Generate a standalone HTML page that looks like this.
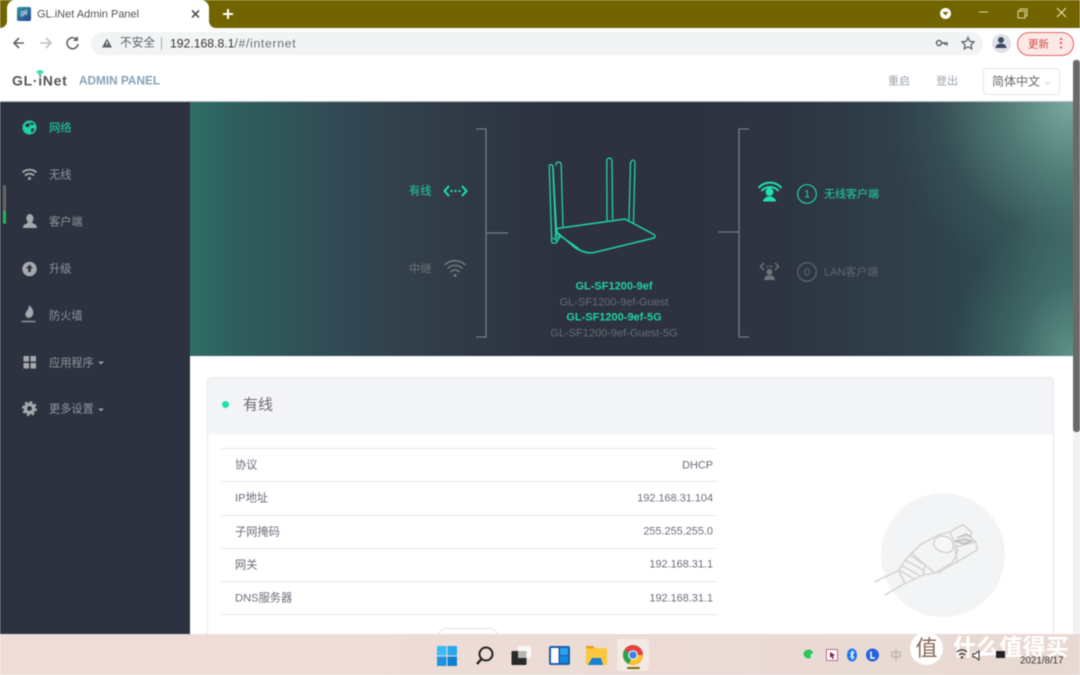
<!DOCTYPE html>
<html lang="zh"><head><meta charset="utf-8"><title>GL.iNet Admin Panel</title>
<style>
html,body{margin:0;padding:0;width:1080px;height:675px;overflow:hidden;background:#fff;font-family:"Liberation Sans","Noto Sans CJK SC",sans-serif}
#r{position:absolute;left:0;top:0;width:1080px;height:675px;overflow:hidden;filter:blur(.4px)}
.a{position:absolute}
.t{position:absolute;white-space:nowrap;line-height:16px;transform:translateY(-7.5px)}
.s{font-size:11.2px;color:#92959d;left:49px}
.l{font-size:11.2px;color:#6c6c7a;left:235px}
.v{font-size:10.9px;color:#6c6c7a;right:367px}
.n{font-size:11px;color:#666b73;left:514px;width:200px;text-align:center}
.g{color:#1fd3a2;font-weight:bold}
.h{position:absolute;left:221px;width:496px;height:1px;background:#e6e7ea}
</style></head><body><div id="r">
<!-- chrome -->
<div class="a" style="left:0;top:0;width:1080px;height:28px;background:#726500"></div>
<div class="a" style="left:0;top:28px;width:1080px;height:31px;background:#fff"></div>
<div class="a" style="left:0;top:20px;width:216px;height:8px;background:#fff"></div>
<div class="a" style="left:0;top:0;width:7px;height:28px;background:#726500;border-radius:0 0 7px 0"></div>
<div class="a" style="left:209px;top:0;width:8px;height:28px;background:#726500;border-radius:0 0 0 7px"></div>
<div class="a" style="left:7px;top:0;width:202px;height:28px;background:#fff;border-radius:8px 8px 0 0"></div>
<div class="a" style="left:17px;top:7px;width:14px;height:14px;border-radius:2px;background:linear-gradient(135deg,#2b9a9a,#2a3f9c);color:#fff;font-size:7px;font-style:italic;line-height:14px;text-align:center">gli</div>
<div class="t" style="left:37px;top:14px;font-size:11px;color:#555">GL.iNet Admin Panel</div>
<div class="a" style="left:91px;top:32px;width:892px;height:23px;border-radius:12px;background:#f1f3f4"></div>
<div class="t" style="left:120px;top:43px;font-size:11.7px;color:#5f6368">不安全</div>
<div class="a" style="left:161px;top:37px;width:1px;height:13px;background:#a8abaf"></div>
<div class="t" style="left:170px;top:43px;font-size:12.2px;color:#333">192.168.8.1<span style="color:#6a6d72;letter-spacing:.7px">/#/internet</span></div>
<div class="a" style="left:992px;top:34px;width:19px;height:19px;border-radius:50%;background:#dfe1e6"></div>
<div class="a" style="left:1017px;top:32px;width:55px;height:22px;border:1px solid #dc6a60;border-radius:12px;background:#fce8e6"></div>
<div class="t" style="left:1028px;top:44px;font-size:10.5px;color:#d04a40">更新</div>
<!-- header -->
<div class="a" style="left:0;top:59px;width:1080px;height:43px;background:#fff;border-bottom:1px solid #b9bdc3;box-sizing:border-box"></div>
<div class="t" style="left:12px;top:80px;font-size:14px;font-weight:bold;color:#555;letter-spacing:.7px">GL·iNet</div>
<div class="t" style="left:79px;top:80px;font-size:11.8px;font-weight:bold;color:#86a2b9">ADMIN PANEL</div>
<div class="t" style="left:888px;top:81px;font-size:11px;color:#9aa3ad">重启</div>
<div class="t" style="left:936px;top:81px;font-size:11px;color:#9aa3ad">登出</div>
<div class="a" style="left:983px;top:68px;width:75px;height:25px;border:1px solid #e3e5e8;border-radius:4px;box-sizing:content-box"></div>
<div class="t" style="left:992px;top:81px;font-size:12px;color:#6a6a6a">简体中文</div>
<!-- sidebar -->
<div class="a" style="left:0;top:102px;width:190px;height:533px;background:#2d3240"></div>
<div class="a" style="left:3px;top:185px;width:3px;height:39px;border-radius:2px;background:linear-gradient(#666 0,#666 67%,#22b35e 67%)"></div>
<div class="t s" style="top:127.500px;color:#1fd3a2">网络</div>
<div class="t s" style="top:174.500px">无线</div>
<div class="t s" style="top:221.500px">客户端</div>
<div class="t s" style="top:268.500px">升级</div>
<div class="t s" style="top:315.500px">防火墙</div>
<div class="t s" style="top:362.500px">应用程序</div>
<div class="t s" style="top:409px">更多设置</div>
<!-- banner -->
<div class="a" style="left:190px;top:102px;width:883px;height:254px;background:radial-gradient(ellipse 190px 190px at 100% 0%,rgba(122,168,160,1) 0%,rgba(100,148,138,.6) 38%,rgba(80,120,115,.2) 72%,rgba(70,110,105,0) 100%),radial-gradient(ellipse 120px 150px at 100% 100%,rgba(100,150,140,.9) 0%,rgba(80,130,122,.45) 48%,rgba(60,110,105,0) 100%),linear-gradient(90deg,#2e6e66 0%,#2f5f5d 5%,#305659 10%,#314a54 17%,#333f4c 25%,#2f3845 33%,#2e3240 42%,#2e3240 55%,#2e3542 68%,#303c49 77%,#2f444d 86%,#2f4d52 93%,#36605f 100%)"></div>
<div class="t" style="left:409px;top:191px;font-size:11.2px;color:#1fd3a2">有线</div>
<div class="t" style="left:409px;top:268.500px;font-size:11.2px;color:#6b7378">中继</div>
<div class="t n g" style="top:286px">GL-SF1200-9ef</div>
<div class="t n" style="top:301.500px">GL-SF1200-9ef-Guest</div>
<div class="t n g" style="top:317px">GL-SF1200-9ef-5G</div>
<div class="t n" style="top:333px">GL-SF1200-9ef-Guest-5G</div>
<div class="t" style="left:797px;width:20px;text-align:center;top:194px;font-size:11px;color:#1fd3a2">1</div>
<div class="t" style="left:797px;width:20px;text-align:center;top:272px;font-size:11px;color:#5f676d">0</div>
<div class="t" style="left:824px;top:194px;font-size:11px;color:#1fd3a2">无线客户端</div>
<div class="t" style="left:824px;top:272px;font-size:11px;color:#5f676d">LAN客户端</div>
<!-- content -->
<div class="a" style="left:207px;top:377px;width:847px;height:270px;border:1px solid #e8e9ec;border-radius:4px;box-sizing:border-box;background:#fff"></div>
<div class="a" style="left:208px;top:378px;width:845px;height:56px;background:#f3f4f6;border-radius:4px 4px 0 0"></div>
<div class="a" style="left:222px;top:401px;width:7px;height:7px;border-radius:50%;background:#1fe0ac"></div>
<div class="t" style="left:243px;top:404.500px;font-size:15px;color:#6c6c74">有线</div>
<div class="h" style="top:448px"></div><div class="h" style="top:481px"></div><div class="h" style="top:515px"></div><div class="h" style="top:548px"></div><div class="h" style="top:581px"></div><div class="h" style="top:614px"></div>
<div class="t l" style="top:465px">协议</div><div class="t v" style="top:464.500px">DHCP</div>
<div class="t l" style="top:498px">IP地址</div><div class="t v" style="top:497.500px">192.168.31.104</div>
<div class="t l" style="top:531.500px">子网掩码</div><div class="t v" style="top:531px">255.255.255.0</div>
<div class="t l" style="top:565px">网关</div><div class="t v" style="top:564px">192.168.31.1</div>
<div class="t l" style="top:598px">DNS服务器</div><div class="t v" style="top:597.500px">192.168.31.1</div>
<div class="a" style="left:437px;top:628px;width:62px;height:20px;border:1px solid #dfe2e8;border-radius:12px;box-sizing:border-box"></div>
<!-- scrollbar -->
<div class="a" style="left:1073px;top:59px;width:7px;height:576px;background:#f1f1f1"></div>
<div class="a" style="left:1073px;top:60px;width:7px;height:372px;border-radius:3px;background:#696969"></div>
<!-- taskbar -->
<div class="a" style="left:0;top:634px;width:1080px;height:41px;background:linear-gradient(90deg,#f0dcd6,#eddcd6 50%,#e9d9d3)"></div>
<div class="a" style="left:617px;top:639px;width:32px;height:32px;border-radius:4px;background:#f3e9e5"></div>
<div class="a" style="left:627px;top:667px;width:13px;height:2px;border-radius:1px;background:#7a6c00"></div>
<div class="a" style="left:910px;top:632px;width:33px;height:33px;border-radius:50%;background:#fff;text-align:center;font-size:22px;line-height:33px;color:#8a6a5a">值</div>
<div class="t" style="left:953px;top:647px;font-size:23px;font-weight:bold;color:#fff;line-height:28px;transform:translateY(-14px);letter-spacing:.2px">什么值得买</div>
<div class="t" style="left:1020px;top:661px;font-size:9.800px;color:#3a3533">2021/8/17</div>
<!-- vector overlay -->
<svg class="a" style="left:0;top:0" width="1080" height="675" viewBox="0 0 1080 675" fill="none">
<!-- chrome controls -->
<path d="M192 10.500l7 7M199 10.500l-7 7" stroke="#555" stroke-width="1.600"/>
<path d="M223 14h10M228 9v10" stroke="#fff" stroke-width="2"/>
<path d="M24 43H14M19 38l-5 5 5 5" stroke="#5f6368" stroke-width="1.600"/>
<path d="M51 43H40M46 38l5 5-5 5" stroke="#bdbfc2" stroke-width="1.600"/>
<path d="M77 40a5.500 5.500 0 1 0 1 4" stroke="#5f6368" stroke-width="1.600"/><path d="M78 36v5h-5z" fill="#5f6368"/>
<path d="M102 47.500l5-9 5 9z" fill="#5f6368"/><path d="M107 41.500v3.500" stroke="#fff" stroke-width="1"/>
<circle cx="945.500" cy="13.500" r="5.500" fill="#fff"/><path d="M942.500 12h6l-3 3.500z" fill="#726500"/>
<path d="M979 12h9" stroke="#e0d9a0" stroke-width="1"/>
<path d="M1018 11h7v7h-7zM1020 11V9h7v7h-2" stroke="#e0d9a0" stroke-width="1"/>
<path d="M1057 8l9 9M1066 8l-9 9" stroke="#ece7bb" stroke-width="1"/>
<circle cx="939" cy="43" r="2.500" stroke="#5f6368" stroke-width="1.500"/><path d="M941 43h6v2.500M945 43v2" stroke="#5f6368" stroke-width="1.500"/>
<path d="M968 37.500l1.800 3.800 4.200.5-3 2.900.8 4.100-3.800-2-3.800 2 .8-4.100-3-2.900 4.200-.5z" stroke="#5f6368" stroke-width="1.300"/>
<circle cx="1001" cy="40" r="3" fill="#3f4a63"/><path d="M995.500 48c0-6 11-6 11 0z" fill="#3f4a63"/>
<circle cx="1061" cy="39" r="1" fill="#d93a30"/><circle cx="1061" cy="43" r="1" fill="#d93a30"/><circle cx="1061" cy="47.500" r="1" fill="#d93a30"/>
<!-- logo wifi, select caret -->
<path d="M36 71.500q4-3 8 0l-2.800 3.500h-2.400z" fill="#45dfb2"/>
<path d="M1045 82l2.500 2.500L1050 82" stroke="#c5c8cc" stroke-width=".8"/>
<!-- sidebar icons -->
<circle cx="29.500" cy="127.500" r="7" fill="#1fd3a2"/><path d="M25 125l3-2 2 1-1 3-3 0zM31 129l3-1 0 2-2 3-1-2zM30 122l3 1 1 2-3 0z" fill="#2d3240"/>
<path d="M22.500 172.500a10 10 0 0 1 14 0M25 175.500a6.500 6.500 0 0 1 9 0" stroke="#a6a8ad" stroke-width="1.900"/><circle cx="29.500" cy="178.500" r="1.500" fill="#a6a8ad"/>
<path d="M29.500 214c2.500 0 4 2 4 4.500 0 1.500-.8 3-1.800 4l4.300 2.500c.5.500.8 2 .8 3H23c0-1 .3-2.500.8-3l4.300-2.500c-1-1-1.800-2.500-1.800-4 0-2.500 1.500-4.500 3.500-4.500z" fill="#a6a8ad"/>
<circle cx="29.500" cy="269" r="7.200" fill="#a6a8ad"/><path d="M29.500 264.500l-3.500 4h2.200v3.500h2.600v-3.500H33z" fill="#2d3240"/>
<path d="M29 305c3.500 3 5 6 4 9.500-.6 2-2.500 3.500-4.500 3.500-2-.5-3.500-2.500-3-4.500.5-2.500 3.500-4 3.500-8.500z" fill="#a6a8ad"/><path d="M21.500 321.500h14" stroke="#a6a8ad" stroke-width="1.200"/>
<path d="M23.500 356h5.500v5.500h-5.500zM30.500 356h5.500v5.500h-5.500zM23.500 363h5.500v5.500h-5.500zM30.500 363h5.500v5.500h-5.500z" fill="#a6a8ad"/>
<circle cx="29.500" cy="408.500" r="4.100" stroke="#a6a8ad" stroke-width="3.400"/><circle cx="29.500" cy="408.500" r="6.200" stroke="#a6a8ad" stroke-width="2.600" stroke-dasharray="2.500 2.370"/>
<path d="M98 361.500h6l-3 3zM98 408.500h6l-3 3z" fill="#9a9ca3"/>
<!-- brackets -->
<g stroke="#747c82" stroke-width="1.300"><path d="M476 129h10v208h-10M486 233h22M749 129h-10v208h10M718 232h21"/></g>
<!-- banner icons -->
<path d="M449 186l-4.500 5 4.500 5M462 186l4.500 5-4.500 5" stroke="#1fe0ac" stroke-width="2"/><path d="M450.500 191h10" stroke="#1fe0ac" stroke-width="2" stroke-dasharray="2 2"/>
<path d="M444.500 265a15 15 0 0 1 21 0M447.500 268.500a10.500 10.500 0 0 1 15 0M450.500 272a6 6 0 0 1 9 0" stroke="#737b80" stroke-width="1.500"/><circle cx="455" cy="275.500" r="1.500" fill="#737b80"/>
<path d="M758.500 188a15 15 0 0 1 23 0M761.500 191a11 11 0 0 1 17 0" stroke="#1fe0ac" stroke-width="2"/><circle cx="769.500" cy="192" r="4" fill="#1fe0ac"/><path d="M763 201.500c0-3.500 3-3.500 4-5h5c1 1.500 4 1.500 4 5z" fill="#1fe0ac"/>
<path d="M764 263l-3.500 3.500 3.500 3.500M775 263l3.500 3.500-3.500 3.500" stroke="#6f777b" stroke-width="1.400"/><path d="M766.500 266.500h6" stroke="#6f777b" stroke-width="1.400" stroke-dasharray="1.200 1.200"/><circle cx="769.500" cy="272" r="3" fill="#6f777b"/><path d="M764 280c0-3 2-4 3.500-4.500h4c1.500.5 3.500 1.500 3.500 4.500z" fill="#6f777b"/>
<circle cx="807" cy="194" r="9.300" stroke="#1fd3a2" stroke-width="1.200"/>
<circle cx="807" cy="272" r="9.300" stroke="#5f676d" stroke-width="1.200"/>
<!-- router -->
<g stroke="#1fd3a2" stroke-width="1.300" stroke-linejoin="round" stroke-linecap="round">
<path d="M551.700 242l-2.400-75q0-2.500 1.400-2.500t2 1.500l3.300 74"/>
<path d="M553 166l3.500 64M556 165q0-3 2.200-3 2.800 0 3 2.500l1.800 63"/>
<path d="M607 220l-.2-59q.3-3 2.500-3t2.700 3l.6 58"/>
<path d="M629 220l1.500-57q1-3 2.500-3t2 3l-1.500 60"/>
<path d="M557 228.500l68-9.500 29 15.500q2 2 0 3.500l-60 14.500q-6 1-11-1-3-1-6-4l-20-14z" stroke-width="1.500"/>
<path d="M558 233l16 14q5 4 12 5"/>
<path d="M552 243h4l4-6-3-4M553 238l4 3M555 235l3 3"/>
</g>
<!-- ethernet icon -->
<circle cx="943" cy="555" r="62" fill="#f3f4f5"/>
<g stroke="#d3d4d4" stroke-width="1.500" stroke-linejoin="round" stroke-linecap="round">
<path d="M875 581.700l23.500-11.200M885 595l20-11.700"/>
<path d="M898.500 570.500l6.500-10 7-7.500 13 12-2 10-18 8.500z"/>
<path d="M905 560l18 10M901.500 565.500l18 10M899 570l16 9.500M910 555l15 10M912 553l8-8 18-10 12-3 8 18-5 12-18 11-10-8"/>
<path d="M935 573l-12 2M938 573l19-11"/>
<path d="M933.500 544q.5-7 8-8 8 0 11 6 2 5-1 9-3 2-7 1.500-9-2-11-8.500z" fill="#f7f7f7"/>
<path d="M950 532l8-5 5-2 9 7-2 5 6 5 1 8-20 12-2-15"/>
<path d="M955 547l21-5"/>
<path d="M957 538l9-4 5 3M955 541l10-2 7 2-8 3z" stroke="#bdbdbd" fill="#dedede"/>
</g>
<!-- taskbar icons -->
<path d="M437 646h9.500v9.500H437z" fill="#3bbcf4"/><path d="M447.500 646h9.500v9.500h-9.500z" fill="#2aa7ec"/><path d="M437 656.500h9.500v9.500H437z" fill="#1e94df"/><path d="M447.500 656.500h9.500v9.500h-9.500z" fill="#0f7fd0"/>
<circle cx="486" cy="654" r="6.500" stroke="#222" stroke-width="2"/><path d="M481.500 659l-4.500 5" stroke="#222" stroke-width="2.400"/>
<rect x="518" y="646" width="13" height="12" rx="1" fill="#f7f7f7"/><rect x="511.500" y="651" width="15" height="14" rx="1" fill="#2a2a2a"/><rect x="518" y="651" width="8.500" height="7" fill="#b8b6b5"/>
<rect x="549" y="646" width="21" height="19" rx="2" fill="#1d5fa5"/><rect x="551" y="648" width="7.500" height="15" fill="#fff"/><rect x="560" y="648" width="8" height="7" fill="#2aa2ee"/><rect x="560" y="656" width="8" height="7" fill="#1488df"/>
<path d="M586 647a1 1 0 0 1 1-1h6l2 2h11a1 1 0 0 1 1 1v15a1 1 0 0 1-1 1h-19a1 1 0 0 1-1-1z" fill="#fcc93e"/><path d="M586 646h7l2 2.500h-9z" fill="#e0a020"/><path d="M592 658h9l2 7h-15z" fill="#1a7fd0"/>
<circle cx="633" cy="655" r="10" fill="#e0443a"/><path d="M633 655l-8.700-5a10 10 0 0 0 4.500 14.100z" fill="#2ca24f"/><path d="M633 655h10a10 10 0 0 1-14.200 9.100z" fill="#fbc02d"/><circle cx="633" cy="655" r="4.800" fill="#fff"/><circle cx="633" cy="655" r="3.700" fill="#3f7fe8"/>
<!-- tray -->
<ellipse cx="808.500" cy="654" rx="5" ry="4.500" fill="#2ec55a"/><ellipse cx="814" cy="656" rx="3.500" ry="3" fill="#dfe0dc"/>
<rect x="826.500" y="649.500" width="11" height="11" fill="#fff" stroke="#b56a8f"/><path d="M830 652l5 3-2 1 1 2.500-1.500.5-1-2.500-1.500 1.500z" fill="#8d1e4e"/>
<ellipse cx="852" cy="655" rx="5" ry="6.500" fill="#1a73e8"/><path d="M850 652.500l4 5-2 1.500v-8l2 1.500-4 5" stroke="#fff" stroke-width=".9"/>
<circle cx="872.500" cy="655" r="6.500" fill="#2563e0"/><path d="M871 651.500v6.500h4" stroke="#fff" stroke-width="1.500"/>
<path d="M892 652h8v5h-8zM896 649v12" stroke="#b8b6b2" stroke-width="1.300"/>
<path d="M957 652a7 7 0 0 1 10 0M959 655a4 4 0 0 1 6 0" stroke="#333" stroke-width="1.200"/><circle cx="962" cy="657.500" r="1.200" fill="#333"/>
<path d="M979 651l-4 3h-2v3h2l4 3z" stroke="#333" fill="#fff"/>
<rect x="996" y="651" width="9" height="7" fill="#222"/>
</svg>
</div></body></html>
